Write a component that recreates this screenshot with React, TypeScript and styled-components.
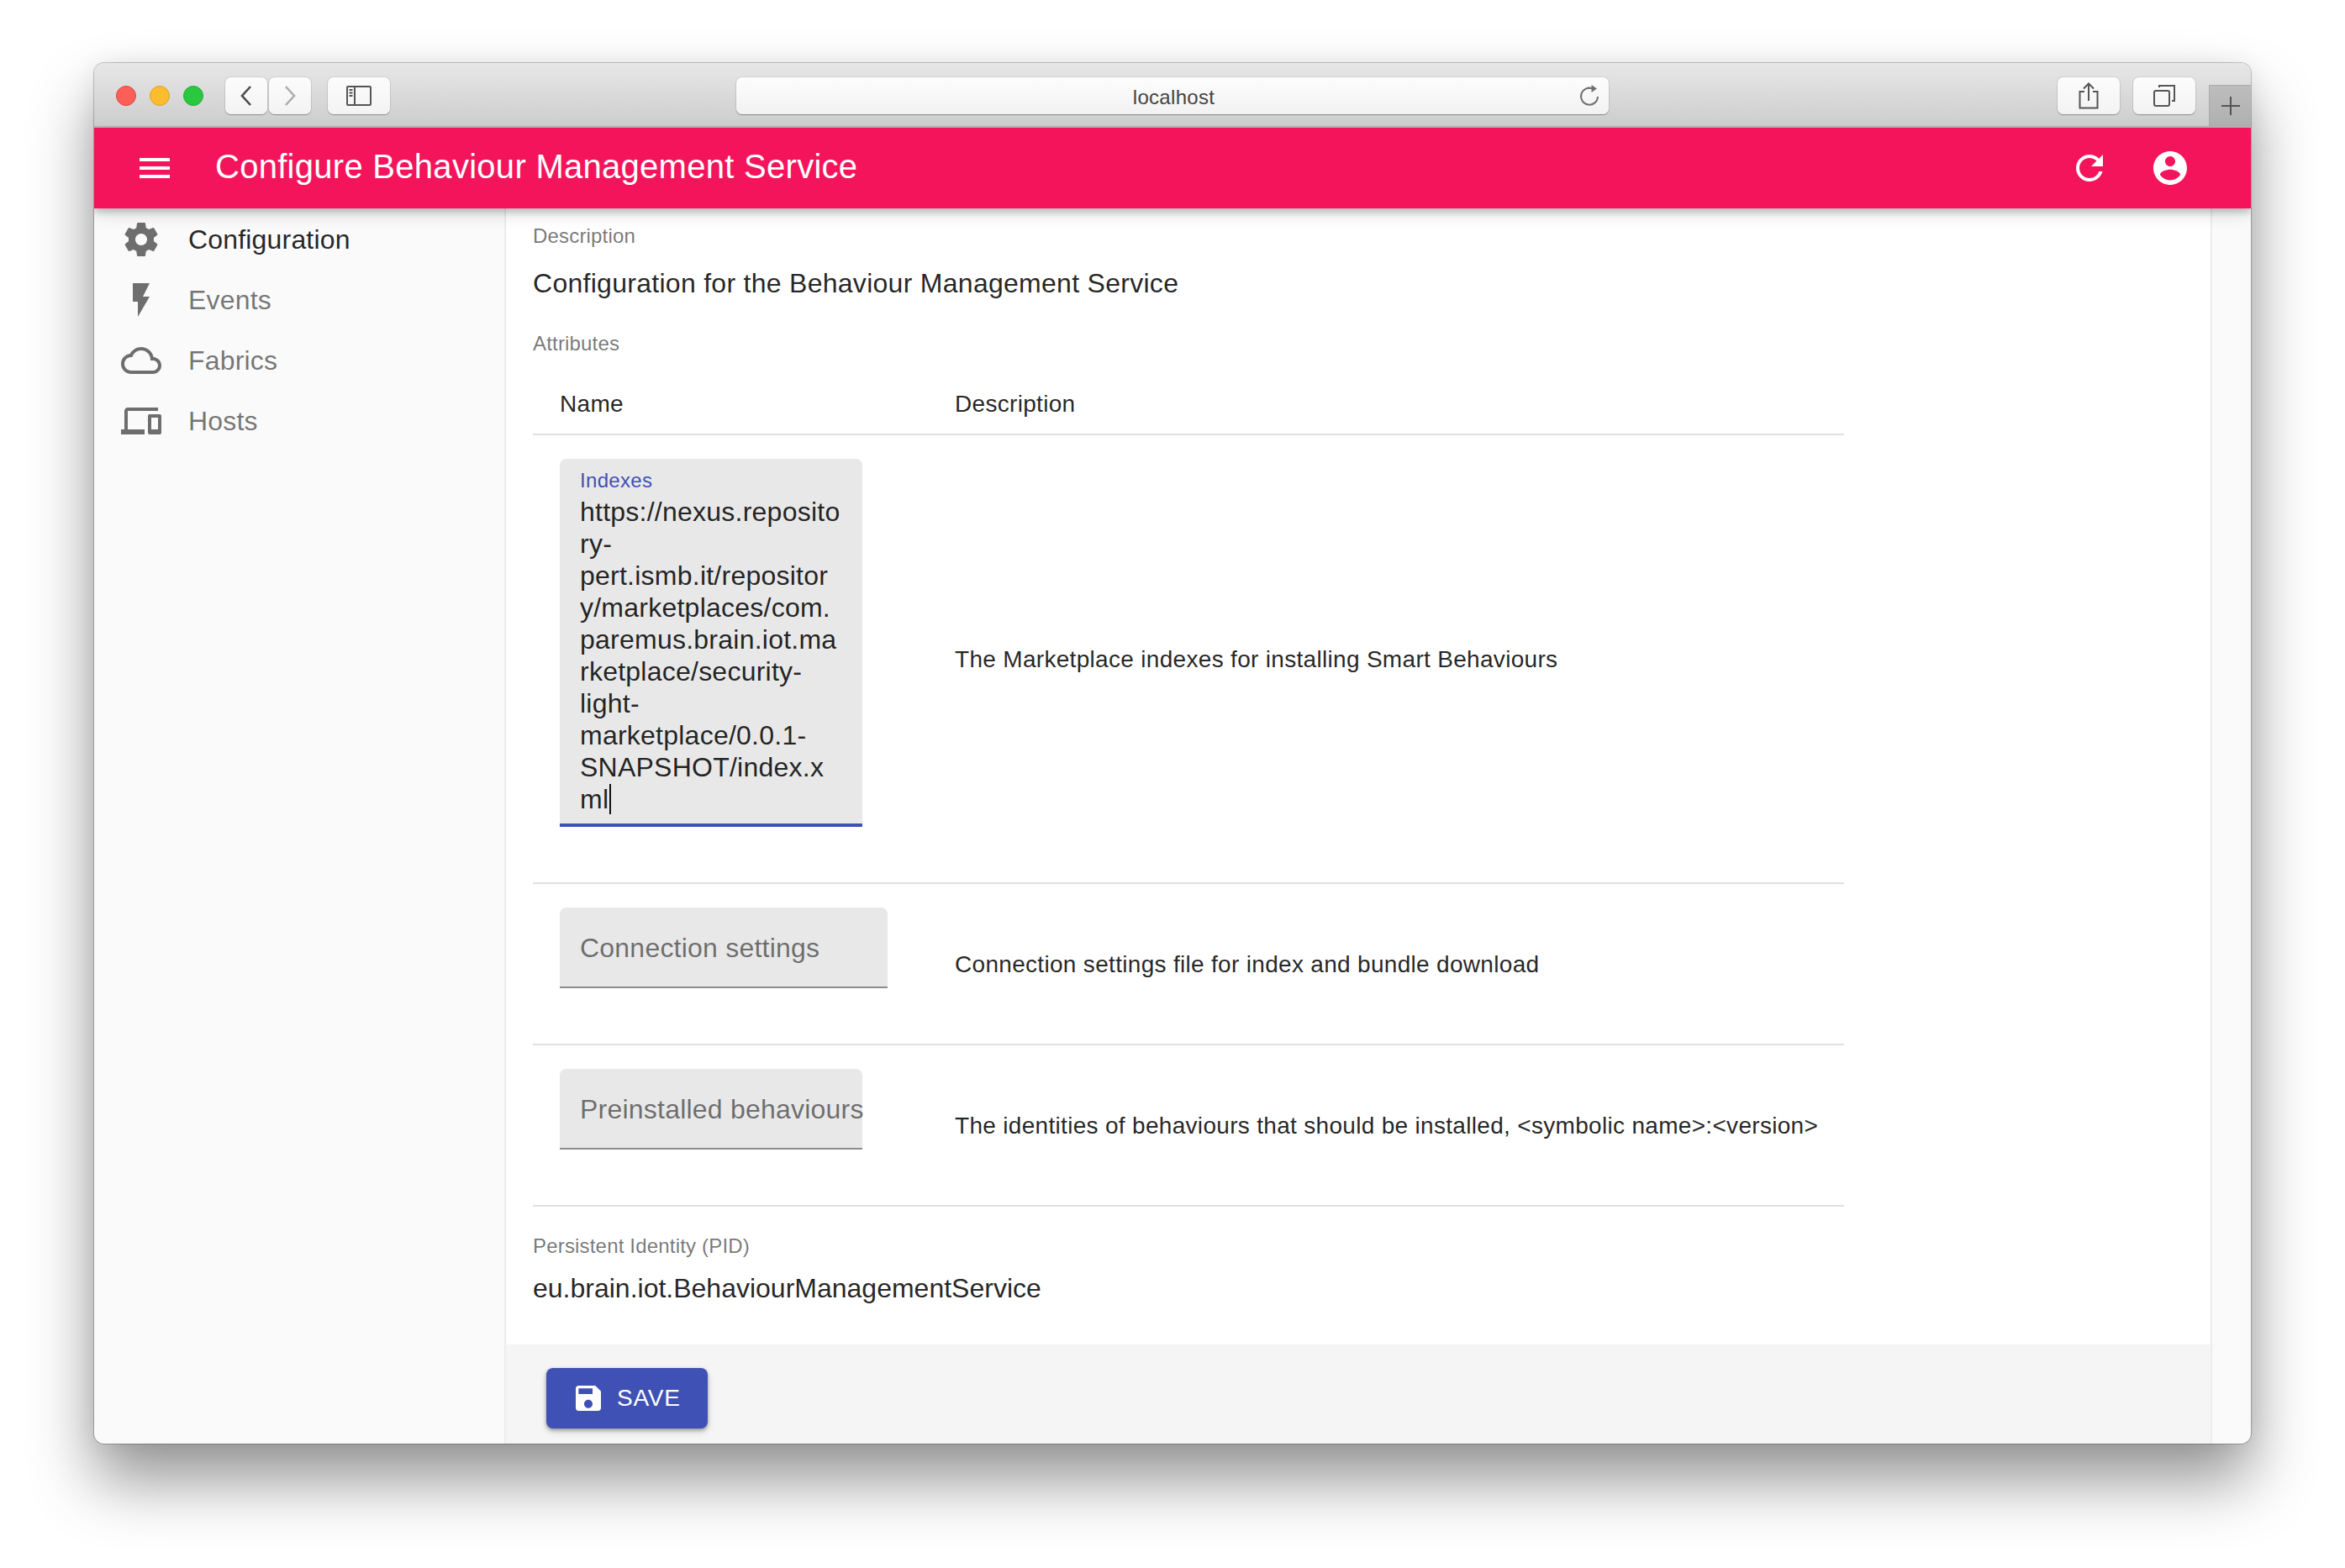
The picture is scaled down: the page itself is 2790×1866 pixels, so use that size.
import React from 'react';
import styled, { createGlobalStyle } from 'styled-components';

const Global = createGlobalStyle`
  html, body { margin: 0; padding: 0; background: #fff; }
  body { width: 2790px; height: 1866px; overflow: hidden; font-family: "Liberation Sans", Arial, sans-serif; }
  * { box-sizing: border-box; }
`;

const Page = styled.div`
  width: 2790px;
  height: 1866px;
  padding: 75px 112px 148px;
`;
const Win = styled.div`
  width: 2566px;
  height: 1643px;
  display: flex;
  flex-direction: column;
  border-radius: 12px;
  background: #fafafa;
  overflow: hidden;
  box-shadow: 0 0 0 1px rgba(0,0,0,.22), 0 44px 76px rgba(0,0,0,.42), 0 0 30px rgba(0,0,0,.07);
`;
const TitleBar = styled.div`
  height: 77px;
  flex: none;
  display: flex;
  align-items: flex-start;
  padding: 17px 0 0 26px;
  background: linear-gradient(#e7e7e7, #cdcdcd);
  border-bottom: 2px solid #b9b9b9;
`;
const Dot = styled.span<{ $c: string; $b: string }>`
  width: 24px;
  height: 24px;
  margin: 10px 16px 0 0;
  border-radius: 50%;
  flex: none;
  background: ${p => p.$c};
  border: 1px solid ${p => p.$b};
`;
const ChromeButton = styled.div<{ $w: number; $ml?: number }>`
  width: ${p => p.$w}px;
  height: 44px;
  margin-left: ${p => p.$ml ?? 0}px;
  flex: none;
  display: flex;
  align-items: center;
  justify-content: center;
  border-radius: 7px;
  background: linear-gradient(#fcfcfc, #f3f3f3);
  box-shadow: 0 1px 1px rgba(0,0,0,.28), 0 0 0 1px rgba(0,0,0,.07);
  color: #555;
`;
const UrlBar = styled.div`
  width: 1038px;
  height: 44px;
  margin-left: 412px;
  flex: none;
  position: relative;
  display: flex;
  align-items: center;
  justify-content: center;
  border-radius: 7px;
  background: linear-gradient(#fdfdfd, #f2f2f2);
  box-shadow: 0 1px 1px rgba(0,0,0,.32), 0 0 0 1px rgba(0,0,0,.07);
  font-size: 24px;
  color: #444;
  padding: 3px 0 0 3px;
  letter-spacing: .3px;
`;
const UrlReload = styled.svg`
  position: absolute;
  right: 9px;
  top: 7px;
`;
const NewTab = styled.div`
  width: 50px;
  height: 49px;
  margin-left: 16px;
  margin-top: 9px;
  flex: none;
  display: flex;
  align-items: center;
  justify-content: center;
  background: linear-gradient(#bdbdbd, #b0b0b0);
  border-left: 1px solid #aaa;
  border-top: 1px solid #aaa;
  color: #555;
`;
const AppBar = styled.header`
  height: 96px;
  flex: none;
  display: flex;
  align-items: center;
  padding: 0 72px 0 48px;
  background: #f4145b;
  color: #fff;
  position: relative;
  z-index: 2;
  box-shadow: 0 4px 8px rgba(0,0,0,.2), 0 8px 18px rgba(0,0,0,.12);
`;
const AppTitle = styled.h1`
  flex: 1;
  margin: 0 0 3px 48px;
  font-size: 40px;
  font-weight: 400;
  letter-spacing: .28px;
`;
const AppIcon = styled.svg<{ $ml?: number }>`
  width: 48px;
  height: 48px;
  flex: none;
  fill: currentColor;
  margin-left: ${p => p.$ml ?? 0}px;
`;
const Body = styled.div`
  flex: 1;
  min-height: 0;
  display: flex;
`;
const Side = styled.nav`
  width: 490px;
  flex: none;
  border-right: 2px solid #ececec;
  padding-top: 1px;
`;
const NavItem = styled.div<{ $on?: boolean }>`
  height: 72px;
  display: flex;
  align-items: center;
  padding-left: 32px;
  font-size: 32px;
  letter-spacing: .18px;
  color: ${p => (p.$on ? 'rgba(0,0,0,.87)' : 'rgba(0,0,0,.54)')};
  svg { width: 48px; height: 48px; fill: #6e6e6e; margin-right: 32px; flex: none; }
`;
const MainCol = styled.div`
  width: 2030px;
  flex: none;
  display: flex;
  flex-direction: column;
  border-right: 2px solid #ececec;
  background: #fff;
`;
const Scroll = styled.div`
  flex: 1;
  padding: 19px 0 0 32px;
`;
const Caption = styled.div<{ $t?: number }>`
  font-size: 24px;
  line-height: 28px;
  letter-spacing: .18px;
  margin-top: ${p => p.$t ?? 0}px;
  color: rgba(0,0,0,.54);
`;
const Value = styled.div<{ $t: number; $b: number; $ls: number }>`
  font-size: 32px;
  line-height: 40px;
  color: rgba(0,0,0,.87);
  letter-spacing: ${p => p.$ls}px;
  margin-top: ${p => p.$t}px;
  margin-bottom: ${p => p.$b}px;
`;
const Table = styled.div`
  width: 1560px;
  margin-top: 23px;
`;
const Row = styled.div<{ $head?: boolean }>`
  display: grid;
  grid-template-columns: 470px 1fr;
  padding-left: 32px;
  border-bottom: 2px solid #e0e0e0;
  font-size: 28px;
  letter-spacing: .31px;
  color: rgba(0,0,0,.87);
  align-items: center;
  height: ${p => (p.$head ? '72px' : 'auto')};
`;
const NameCell = styled.div`
  padding: 28px 0 66px;
`;
const DescCell = styled.div`
  padding-top: 2px;
`;
const Filled = styled.div<{ $w: number }>`
  width: ${p => p.$w}px;
  height: 96px;
  padding: 3px 0 0 24px;
  display: flex;
  align-items: center;
  background: #e8e8e8;
  border-radius: 8px 8px 0 0;
  border-bottom: 2px solid #8c8c8c;
  font-size: 32px;
  letter-spacing: .22px;
  color: rgba(0,0,0,.54);
  white-space: nowrap;
`;
const Focused = styled.div`
  width: 360px;
  height: 438px;
  padding: 14px 0 0 24px;
  background: #e8e8e8;
  border-radius: 8px 8px 0 0;
  border-bottom: 4px solid #3f51b5;
`;
const FloatLabel = styled.div`
  font-size: 24px;
  line-height: 24px;
  color: #3f51b5;
`;
const Lines = styled.div`
  margin-top: 6px;
  font-size: 32px;
  line-height: 38px;
  letter-spacing: .24px;
  color: rgba(0,0,0,.87);
  white-space: nowrap;
`;
const Caret = styled.span`
  display: inline-block;
  width: 2px;
  height: 36px;
  margin-left: 1px;
  vertical-align: -7px;
  background: #111;
`;
const Footer = styled.div`
  height: 118px;
  flex: none;
  padding: 28px 0 0 48px;
  background: #f5f5f5;
`;
const SaveButton = styled.button`
  width: 192px;
  height: 72px;
  display: flex;
  align-items: center;
  padding: 0 0 0 32px;
  border: 0;
  border-radius: 8px;
  background: #3f51b5;
  color: #fff;
  font-family: inherit;
  font-size: 28px;
  letter-spacing: .8px;
  box-shadow: 0 2px 4px rgba(0,0,0,.3), 0 4px 8px rgba(0,0,0,.14);
  svg { width: 40px; height: 40px; fill: #fff; margin-right: 14px; margin-left: -2px; }
`;

const url = [
  'https://nexus.reposito', 'ry-', 'pert.ismb.it/repositor', 'y/marketplaces/com.',
  'paremus.brain.iot.ma', 'rketplace/security-', 'light-', 'marketplace/0.0.1-', 'SNAPSHOT/index.x',
];

const icons = {
  menu: 'M3 18h18v-2H3v2zm0-5h18v-2H3v2zm0-7v2h18V6H3z',
  refresh: 'M17.65 6.35C16.2 4.9 14.21 4 12 4c-4.42 0-7.99 3.58-7.99 8s3.57 8 7.99 8c3.73 0 6.84-2.55 7.73-6h-2.08c-.82 2.33-3.04 4-5.65 4-3.31 0-6-2.69-6-6s2.69-6 6-6c1.66 0 3.14.69 4.22 1.78L13 11h7V4l-2.35 2.35z',
  account: 'M12 2C6.48 2 2 6.48 2 12s4.48 10 10 10 10-4.48 10-10S17.52 2 12 2zm0 3c1.66 0 3 1.34 3 3s-1.34 3-3 3-3-1.34-3-3 1.34-3 3-3zm0 14.2c-2.5 0-4.71-1.28-6-3.22.03-1.99 4-3.08 6-3.08 1.99 0 5.97 1.09 6 3.08-1.29 1.94-3.5 3.22-6 3.22z',
  settings: 'M19.43 12.98c.04-.32.07-.64.07-.98s-.03-.66-.07-.98l2.11-1.65c.19-.15.24-.42.12-.64l-2-3.46c-.12-.22-.39-.3-.61-.22l-2.49 1c-.52-.4-1.08-.73-1.69-.98l-.38-2.65C14.46 2.18 14.25 2 14 2h-4c-.25 0-.46.18-.49.42l-.38 2.65c-.61.25-1.17.59-1.69.98l-2.49-1c-.23-.09-.49 0-.61.22l-2 3.46c-.13.22-.07.49.12.64l2.11 1.65c-.04.32-.07.65-.07.98s.03.66.07.98l-2.11 1.65c-.19.15-.24.42-.12.64l2 3.46c.12.22.39.3.61.22l2.49-1c.52.4 1.08.73 1.69.98l.38 2.65c.03.24.24.42.49.42h4c.25 0 .46-.18.49-.42l.38-2.65c.61-.25 1.17-.59 1.69-.98l2.49 1c.23.09.49 0 .61-.22l2-3.46c.12-.22.07-.49-.12-.64l-2.11-1.65zM12 15.5c-1.93 0-3.5-1.57-3.5-3.5s1.57-3.5 3.5-3.5 3.5 1.57 3.5 3.5-1.57 3.5-3.5 3.5z',
  flash: 'M7 2v11h3v9l7-12h-4l4-8z',
  cloud: 'M19.35 10.04C18.67 6.59 15.64 4 12 4 9.11 4 6.6 5.64 5.35 8.04 2.34 8.36 0 10.91 0 14c0 3.31 2.69 6 6 6h13c2.76 0 5-2.24 5-5 0-2.64-2.05-4.78-4.65-4.96zM19 18H6c-2.21 0-4-1.79-4-4s1.79-4 4-4h.71C7.37 7.69 9.48 6 12 6c3.04 0 5.5 2.46 5.5 5.5v.5H19c1.66 0 3 1.34 3 3s-1.34 3-3 3z',
  devices: 'M4 6h18V4H4c-1.1 0-2 .9-2 2v11H0v3h14v-3H4V6zm19 2h-6c-.55 0-1 .45-1 1v10c0 .55.45 1 1 1h6c.55 0 1-.45 1-1V9c0-.55-.45-1-1-1zm-1 9h-4v-7h4v7z',
  save: 'M17 3H5c-1.11 0-2 .9-2 2v14c0 1.1.89 2 2 2h14c1.1 0 2-.9 2-2V7l-4-4zm-5 16c-1.66 0-3-1.34-3-3s1.34-3 3-3 3 1.34 3 3-1.34 3-3 3zm3-10H5V5h10v4z',
};

const nav: [string, string, boolean][] = [
  ['Configuration', icons.settings, true],
  ['Events', icons.flash, false],
  ['Fabrics', icons.cloud, false],
  ['Hosts', icons.devices, false],
];

export default function App() {
  return (
    <Page>
      <Global />
      <Win>
        <TitleBar>
          <Dot $c="#fc5f57" $b="#e2463f" />
          <Dot $c="#fdbc2e" $b="#e0a028" />
          <Dot $c="#2ac840" $b="#26ab35" />
          <ChromeButton $w={50} $ml={10}>
            <svg width="20" height="28" viewBox="0 0 20 28" fill="none" stroke="#4a4a4a" strokeWidth="2.6"><path d="M15 3 5 14l10 11" /></svg>
          </ChromeButton>
          <ChromeButton $w={50} $ml={2}>
            <svg width="20" height="28" viewBox="0 0 20 28" fill="none" stroke="#adadad" strokeWidth="2.6"><path d="m5 3 10 11L5 25" /></svg>
          </ChromeButton>
          <ChromeButton $w={74} $ml={20}>
            <svg width="30" height="24" viewBox="0 0 30 24" fill="none" stroke="#555" strokeWidth="2"><rect x="1" y="1" width="28" height="22" rx="1" /><path d="M10 1v22" /><path d="M3.500 5h4M3.500 8.500h4M3.500 12h4" /></svg>
          </ChromeButton>
          <UrlBar>
            localhost
            <UrlReload width="26" height="30" viewBox="0 0 26 30" fill="none" stroke="#707070" strokeWidth="2"><path d="M16 6.500A10 10 0 1 0 22 16" /><path d="M14.500 2 21 6.500 14.500 11z" fill="#707070" stroke="none" /></UrlReload>
          </UrlBar>
          <ChromeButton $w={74} $ml={534}>
            <svg width="24" height="32" viewBox="0 0 24 32" fill="none" stroke="#555" strokeWidth="2"><path d="M7 11H1.500v19.500h21V11H17" /><path d="M12 22V2M6 7.500 12 1.500l6 6" /></svg>
          </ChromeButton>
          <ChromeButton $w={74} $ml={16}>
            <svg width="26" height="26" viewBox="0 0 26 26" fill="none" stroke="#555" strokeWidth="2"><rect x="1" y="7" width="18" height="18" rx="2" /><path d="M7 3V1h18v18h-3" /></svg>
          </ChromeButton>
          <NewTab>
            <svg width="24" height="24" viewBox="0 0 24 24" stroke="#555" strokeWidth="2"><path d="M12 1v22M1 12h22" /></svg>
          </NewTab>
        </TitleBar>
        <AppBar>
          <AppIcon viewBox="0 0 24 24"><path d={icons.menu} /></AppIcon>
          <AppTitle>Configure Behaviour Management Service</AppTitle>
          <AppIcon viewBox="0 0 24 24"><path d={icons.refresh} /></AppIcon>
          <AppIcon viewBox="0 0 24 24" $ml={48}><path d={icons.account} /></AppIcon>
        </AppBar>
        <Body>
          <Side>
            {nav.map(([label, d, on]) => (
              <NavItem key={label} $on={on}>
                <svg viewBox="0 0 24 24"><path d={d} /></svg>
                {label}
              </NavItem>
            ))}
          </Side>
          <MainCol>
            <Scroll>
              <Caption>Description</Caption>
              <Value $t={22} $b={38} $ls={0.28}>Configuration for the Behaviour Management Service</Value>
              <Caption>Attributes</Caption>
              <Table>
                <Row $head><span>Name</span><span>Description</span></Row>
                <Row>
                  <NameCell>
                    <Focused>
                      <FloatLabel>Indexes</FloatLabel>
                      <Lines>
                        {url.map(l => <div key={l}>{l}</div>)}
                        <div>ml<Caret /></div>
                      </Lines>
                    </Focused>
                  </NameCell>
                  <DescCell>The Marketplace indexes for installing Smart Behaviours</DescCell>
                </Row>
                <Row>
                  <NameCell><Filled $w={390}>Connection settings</Filled></NameCell>
                  <DescCell>Connection settings file for index and bundle download</DescCell>
                </Row>
                <Row>
                  <NameCell><Filled $w={360}>Preinstalled behaviours</Filled></NameCell>
                  <DescCell>The identities of behaviours that should be installed, &lt;symbolic name&gt;:&lt;version&gt;</DescCell>
                </Row>
              </Table>
              <Caption $t={33}>Persistent Identity (PID)</Caption>
              <Value $t={16} $b={0} $ls={0}>eu.brain.iot.BehaviourManagementService</Value>
            </Scroll>
            <Footer>
              <SaveButton>
                <svg viewBox="0 0 24 24"><path d={icons.save} /></svg>
                SAVE
              </SaveButton>
            </Footer>
          </MainCol>
        </Body>
      </Win>
    </Page>
  );
}
